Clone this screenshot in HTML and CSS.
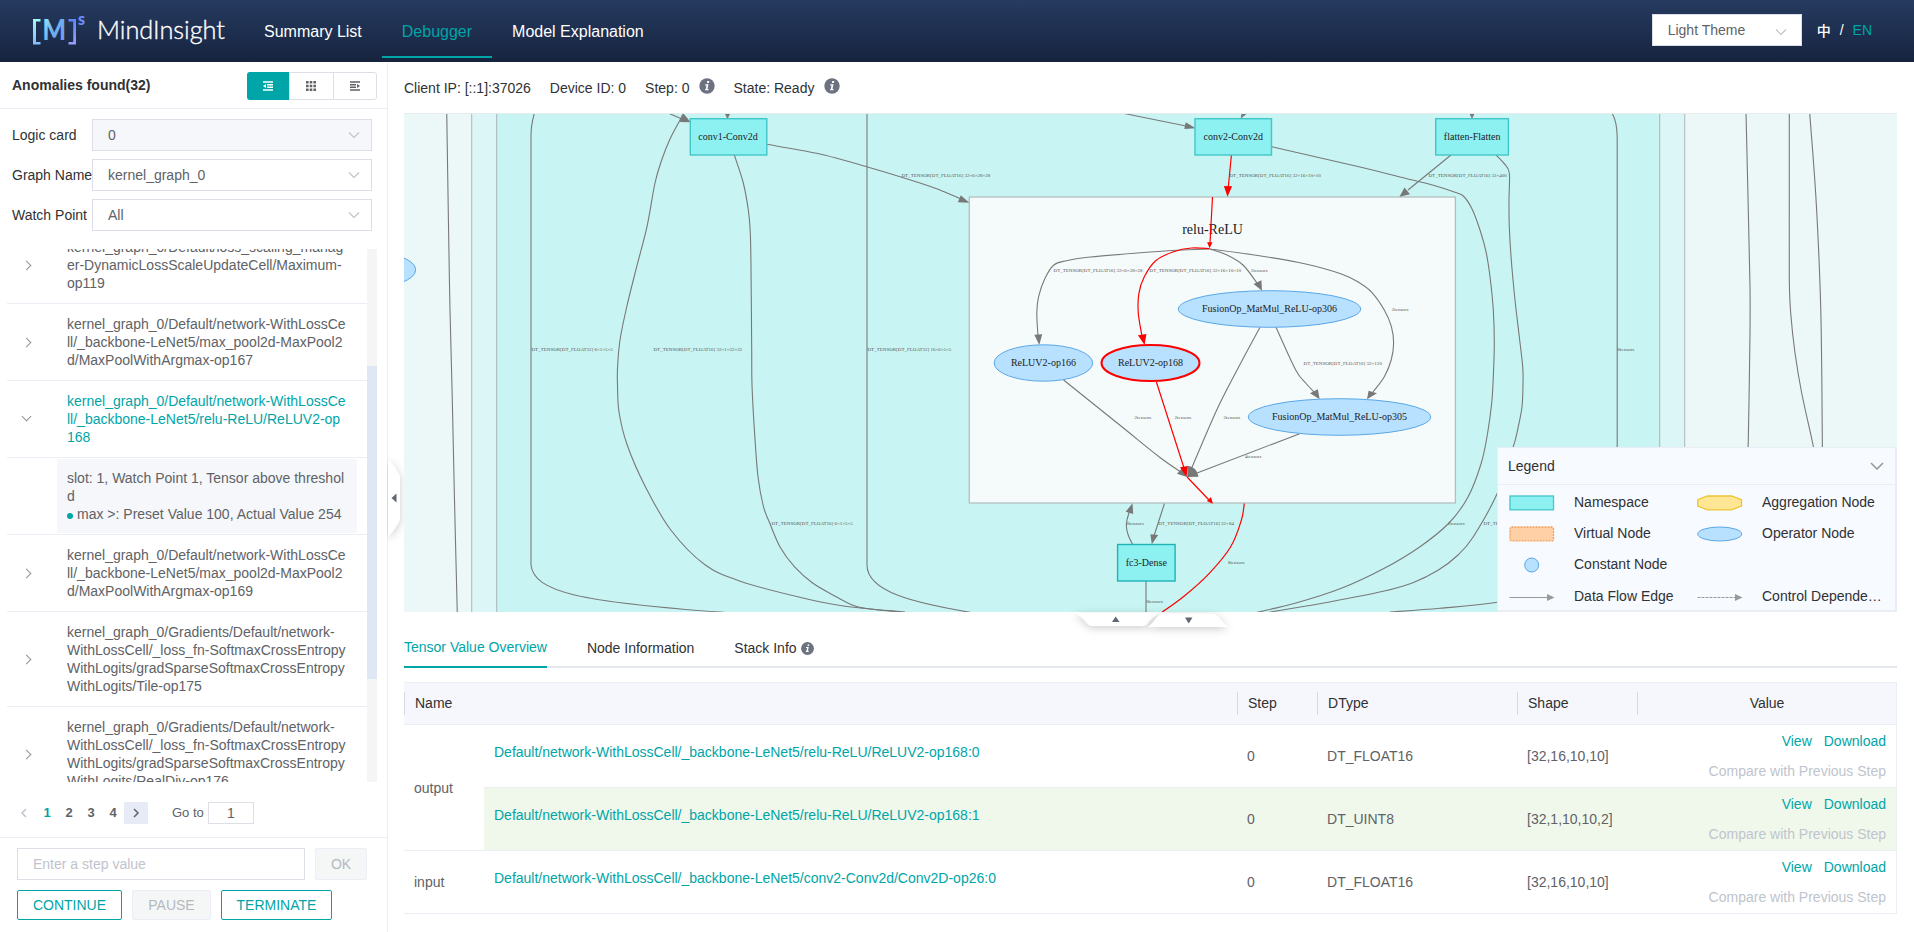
FILE: index.html
```html
<!DOCTYPE html>
<html lang="en">
<head>
<meta charset="utf-8">
<title>MindInsight</title>
<link rel="stylesheet" href="styles.css">
</head>
<body>
<header class="topbar">
  <svg class="logo" width="204" height="52" viewBox="28 4 204 52">
    <defs>
      <linearGradient id="lg" x1="0" y1="0" x2="1" y2="1"><stop offset="0" stop-color="#a4f4f4"/><stop offset=".5" stop-color="#6cb2ee"/><stop offset="1" stop-color="#7f8cf8"/></linearGradient>
      <linearGradient id="lb" x1="0" y1="0" x2="0" y2="1"><stop offset="0" stop-color="#a5fbf3"/><stop offset="1" stop-color="#86b9fb"/></linearGradient>
      <linearGradient id="rb" x1="0" y1="0" x2="0" y2="1"><stop offset="0" stop-color="#5e86f5"/><stop offset="1" stop-color="#9a9cfb"/></linearGradient>
    </defs>
    <path d="M40.500 18H33V43.500H40.500V41H36V20.500H40.500Z" fill="url(#lb)"/>
    <path d="M68.500 18H76V43.500H68.500V41H73.200V20.500H68.500Z" fill="url(#rb)"/>
    <text class="logo-m" x="42.500" y="38.800" textLength="23.500" lengthAdjust="spacingAndGlyphs" fill="url(#lg)">M</text>
    <text class="logo-s" x="78" y="23.500" fill="#6b8cf7">s</text>
    <text class="logo-word" x="97" y="38" textLength="128" lengthAdjust="spacingAndGlyphs">MindInsight</text>
  </svg>
  <nav class="nav">
    <a class="nav-item">Summary List</a>
    <a class="nav-item active">Debugger</a>
    <a class="nav-item">Model Explanation</a>
  </nav>
  <div class="tools">
    <div class="theme">Light Theme<svg class="chev theme-chev" width="14" height="14" viewBox="0 0 14 14"><path d="M2 4.500 7 9.500 12 4.500"/></svg></div>
    <div class="lang"><span class="zh">中</span><span>/</span><span class="en">EN</span></div>
  </div>
</header>
<div class="page">
  <aside class="side">
    <div class="side-head">
      <b>Anomalies found(32)</b>
      <div class="switch">
        <span class="on"><svg width="10" height="10" viewBox="0 0 10 10"><path d="M0 1H10M4 3.700H10M4 6.300H10M0 9H10"/><path class="solid" d="M0 5 3 3V7Z"/></svg></span>
        <span><svg class="grid" width="10" height="10" viewBox="0 0 10 10"><path d="M0 0h2.600v2.600H0zM3.700 0h2.600v2.600H3.700zM7.400 0H10v2.600H7.400zM0 3.700h2.600v2.600H0zM3.700 3.700h2.600v2.600H3.700zM7.400 3.700H10v2.600H7.400zM0 7.400h2.600V10H0zM3.700 7.400h2.600V10H3.700zM7.400 7.400H10V10H7.400z"/></svg></span>
        <span><svg width="10" height="10" viewBox="0 0 10 10"><path d="M0 1H10M0 3.700H6M0 6.300H6M0 9H10"/><path class="solid" d="M10 5 7 3V7Z"/></svg></span>
      </div>
    </div>
    <div class="filters">
      <div class="field"><label>Logic card</label><div class="select disabled">0<svg class="chev" width="14" height="14" viewBox="0 0 14 14"><path d="M2 4.500 7 9.500 12 4.500"/></svg></div></div>
      <div class="field"><label>Graph Name</label><div class="select">kernel_graph_0<svg class="chev" width="14" height="14" viewBox="0 0 14 14"><path d="M2 4.500 7 9.500 12 4.500"/></svg></div></div>
      <div class="field"><label>Watch Point</label><div class="select">All<svg class="chev" width="14" height="14" viewBox="0 0 14 14"><path d="M2 4.500 7 9.500 12 4.500"/></svg></div></div>
    </div>
    <div class="list">
      <div class="rows">
        <div class="row"><i class="arrow"></i><p>kernel_graph_0/Default/loss_scaling_manag<br>er-DynamicLossScaleUpdateCell/Maximum-<br>op119</p></div>
        <div class="row"><i class="arrow"></i><p>kernel_graph_0/Default/network-WithLossCe<br>ll/_backbone-LeNet5/max_pool2d-MaxPool2<br>d/MaxPoolWithArgmax-op167</p></div>
        <div class="row open"><i class="arrow"></i><p>kernel_graph_0/Default/network-WithLossCe<br>ll/_backbone-LeNet5/relu-ReLU/ReLUV2-op<br>168</p></div>
        <div class="row detail"><p>slot: 1, Watch Point 1, Tensor above threshol<br>d<br><i class="dot"></i>max &gt;: Preset Value 100, Actual Value 254</p></div>
        <div class="row"><i class="arrow"></i><p>kernel_graph_0/Default/network-WithLossCe<br>ll/_backbone-LeNet5/max_pool2d-MaxPool2<br>d/MaxPoolWithArgmax-op169</p></div>
        <div class="row"><i class="arrow"></i><p>kernel_graph_0/Gradients/Default/network-<br>WithLossCell/_loss_fn-SoftmaxCrossEntropy<br>WithLogits/gradSparseSoftmaxCrossEntropy<br>WithLogits/Tile-op175</p></div>
        <div class="row"><i class="arrow"></i><p>kernel_graph_0/Gradients/Default/network-<br>WithLossCell/_loss_fn-SoftmaxCrossEntropy<br>WithLogits/gradSparseSoftmaxCrossEntropy<br>WithLogits/RealDiv-op176</p></div>
      </div>
      <div class="scroll"><div class="thumb"></div></div>
    </div>
    <div class="pager">
      <span class="pg prev"><svg width="10" height="10" viewBox="0 0 10 10"><path d="M7 1 3 5 7 9"/></svg></span>
      <span class="pg cur">1</span><span class="pg">2</span><span class="pg">3</span><span class="pg">4</span>
      <span class="next"><svg width="10" height="10" viewBox="0 0 10 10"><path d="M3 1 7 5 3 9"/></svg></span>
      <span class="goto">Go to</span><span class="goto-in">1</span>
    </div>
    <div class="control">
      <div class="crow"><div class="step-in">Enter a step value</div><div class="btn off ok">OK</div></div>
      <div class="crow"><div class="btn w1">CONTINUE</div><div class="btn off w2">PAUSE</div><div class="btn w3">TERMINATE</div></div>
    </div>
    <svg class="fold" width="26" height="96" viewBox="0 0 26 96"><path class="tabshape" d="M1 9 Q9 17 13 26 V70 Q9 79 1 87Z"/><path class="tri" d="M9.500 43.500V52.500L4.500 48Z"/></svg>
  </aside>
  <main class="main">
    <div class="info">
      <span>Client IP: [::1]:37026</span><span>Device ID: 0</span>
      <span class="with-i s1">Step: 0<svg class="ii" width="16" height="16" viewBox="0 0 16 16"><circle cx="8" cy="8" r="7.700"/><path d="M8.300 3h2l-.4 1.900h-2zM6.300 6.200h3.200l-1 4.700h1.100l-.2 1.300H6l.2-1.300h.6l.7-3.400H6.100z"/></svg></span>
      <span class="with-i">State: Ready<svg class="ii" width="16" height="16" viewBox="0 0 16 16"><circle cx="8" cy="8" r="7.700"/><path d="M8.300 3h2l-.4 1.900h-2zM6.300 6.200h3.200l-1 4.700h1.100l-.2 1.300H6l.2-1.300h.6l.7-3.400H6.100z"/></svg></span>
    </div>
    <div class="graph">
      <svg class="canvas" width="1493" height="499" viewBox="404 113 1493 499">
        <rect class="bg0" x="404" y="113" width="1493" height="499"/>
        <rect class="bg1" x="471.700" y="100" width="1213" height="540"/>
        <rect class="bg2" x="496.700" y="100" width="1163" height="540"/>
        <ellipse class="op" cx="366" cy="269.800" rx="49.700" ry="18.300"/>
        <g class="edges">
          <path data-p="446.700,110 448.500,225 450,310 452.300,400 454.500,500 457.300,614"/>
          <path d="M534.700 112 Q531 125 531 135 V565 C534 592 580 602 724 612.300"/>
          <path data-p="684,112 679.500,121 670,139 661.700,160 655,183 647,226.700 636.700,266.700 626.700,307 620,340 617.500,368 617.500,385 619,412 627.200,445 645.400,486.700 670.800,530 705.300,565 741.700,581.700 799.900,597.300 843.500,606 905,612"/>
          <path data-p="734.300,155 743.300,183 748.300,210 750.300,233 751,266.700 751.700,350 752,385 754.400,430 758,476.700 763.500,506.700 769.700,523 779.900,546.700 794.400,566.700 812.600,583 836.200,596.700 854.400,605.700 872.600,609.300 900,612"/>
          <path d="M867 112V565 C867 592 915 603 970 612.300"/>
          <path data-p="766.700,144.300 816.700,153.300 866.700,166.700 920,183 941.400,190.700 960,198.500"/>
          <path d="M668 113 682 119M1123 113.300 1186 126"/>
          <path data-p="1271.800,146.700 1360,167 1400,177 1433.300,185.300 1455,192.300 1463.300,196 1471.700,208.300 1480,230 1486,251.700 1490,276.700 1493.300,310 1494.300,343.300 1493.300,376.700 1491.700,403 1487.300,435 1481,464 1468,497 1449,523 1420,546.700 1384.300,568.300 1341.400,588.300 1295,603.300 1257,612.300"/>
          <path d="M1451 155 1408 190"/>
          <path data-p="1496,155 1504,163.300 1509.300,172.700 1509,200 1509.300,226.700 1511.300,260 1515,300 1519.300,336.700 1522.700,366.700 1523,383.300 1522,406.700 1517.900,428.300 1513.300,446.700 1497.300,493.300 1473.300,536.700 1458,555 1438,570.300 1412.900,582.700 1384.300,591 1330.700,601.700 1269,612.200"/>
          <path data-p="1390,612 1440,608.300 1497.300,602.300 1560,590"/>
          <path d="M1612 113Q1617.200 122 1617.200 138V460"/>
          <path data-p="1746,112 1748.300,210 1750,286.700 1750,333 1749.300,383 1748.300,440 1747.800,455"/>
          <path data-p="1789.300,112 1789.300,200 1789.300,280 1790.700,313 1795,353 1801.700,393 1812,440 1815,455"/>
          <path data-p="1809.600,112 1815,183 1818.300,243 1820.700,306.700 1821.700,366.700 1822.300,440 1822.400,455"/>
          <path data-p="1132.500,544.300 1128.200,535 1126.400,526.700 1127,520 1129.600,511"/>
          <path d="M1164.600 503 1154 536M1146 581V613"/>
        </g>
        <rect class="group" x="969.300" y="197" width="486.100" height="306"/>
        <text class="title" x="1212.500" y="234">relu-ReLU</text>
        <g class="edges">
          <path data-p="1209.600,249 1177,250.300 1134.300,253.300 1087.900,257.300 1066.400,260.700 1053.900,265 1045,278.300 1038.600,296.700 1036.800,313.300 1038,336"/>
          <path data-p="1210,249 1227,255 1243,265 1257,283"/>
          <path data-p="1210,249 1259.300,255.700 1305.700,264 1341.400,274 1359.300,282.700 1371.800,292.300 1384.300,310 1391.400,326.700 1393.600,343.300 1391.200,360 1384.300,376.700 1373,392"/>
          <path data-p="1063.600,380 1120,425.300 1160,457.500 1181,472"/>
          <path data-p="1260,327.300 1237.100,370 1216.400,410.700 1192,467.300"/>
          <path d="M1299.600 433.700 1197 473"/>
          <path data-p="1276,327.300 1295.700,370 1305.700,383 1314,392"/>
        </g>
        <g class="edges hot">
          <path d="M1231.400 155 1228.200 188M1212.500 197 1210 243M1156.400 382 1184 468M1187.100 477 1209 500"/>
          <path data-p="1209.600,248.700 1191.400,248 1173.600,251.700 1155.700,260.700 1144.300,276.700 1138.900,293.300 1138.300,313.300 1142,336"/>
          <path data-p="1244.300,503.500 1241.400,520 1230.700,546.700 1209.300,573.300 1184.300,596 1162,612.300"/>
        </g>
        <g class="heads">
          <path d="M679.500 122 683.500 113.500 690.700 122.300ZM725 114H730L727.500 119ZM1241.400 114H1246.400L1240.700 118.700ZM1469.700 114H1474.300L1472 119ZM969.300 202.700 960.800 195.200 957.800 202.200ZM1195.700 128.300 1185.700 122.300 1184.300 129ZM1399.500 196.700 1404.500 187.500 1410 194.300ZM1039.300 345 1034.300 334.700 1042.200 334.300ZM1262 290.700 1253.600 284 1261.400 280.300ZM1367 399.300 1368.600 390.700 1377 393.300ZM1319.600 399.300 1310 393.300 1317.900 389.300ZM1187.100 477 1177 473.700 1182.500 467.700ZM1187.100 477 1187.900 465.700Q1197 467 1198.600 476.700ZM1132.500 503.300 1125.700 511.700 1133.200 514ZM1151.800 544.300 1150.400 534.300 1158.200 535Z"/>
          <path class="hot" d="M1227.500 196.700 1223.900 186 1232.100 186.300ZM1209.600 248.300 1207.100 242.300 1212.500 242.300ZM1144.600 345 1137.900 335.300 1146.400 334ZM1186.500 477 1180 467.300 1187.900 466ZM1212.900 503.700 1206.800 501 1211 497Z"/>
        </g>
        <g class="ns">
          <rect x="690.300" y="118.700" width="76.500" height="36.300"/><rect x="1195" y="118.700" width="76.500" height="36.300"/><rect x="1435.700" y="118.700" width="72.700" height="36.300"/><rect class="dark" x="1117.600" y="544.500" width="57.500" height="36.500"/>
        </g>
        <g>
          <ellipse class="op" cx="1269.500" cy="309" rx="91.200" ry="18.300"/><ellipse class="op" cx="1043.400" cy="363" rx="49.300" ry="18.200"/><ellipse class="op sel" cx="1150.500" cy="363" rx="49" ry="18"/><ellipse class="op" cx="1339.500" cy="417" rx="91.200" ry="18.300"/>
        </g>
        <g class="names">
          <text x="728" y="140">conv1-Conv2d</text><text x="1233.200" y="140">conv2-Conv2d</text><text x="1472.200" y="140">flatten-Flatten</text><text x="1146.300" y="566">fc3-Dense</text>
          <text x="1269.500" y="312">FusionOp_MatMul_ReLU-op306</text><text x="1339.500" y="420">FusionOp_MatMul_ReLU-op305</text><text x="1043.400" y="366">ReLUV2-op166</text><text x="1150.500" y="366">ReLUV2-op168</text>
        </g>
        <g class="labels">
          <text x="531.500" y="351">DT_TENSOR[DT_FLOAT32] 6×1×5×5</text>
          <text x="653.500" y="351">DT_TENSOR[DT_FLOAT16] 32×1×32×32</text>
          <text x="867.500" y="351">DT_TENSOR[DT_FLOAT32] 16×6×5×5</text>
          <text x="901.500" y="177">DT_TENSOR[DT_FLOAT16] 32×6×28×28</text>
          <text x="1229.500" y="177">DT_TENSOR[DT_FLOAT16] 32×16×10×10</text>
          <text x="1428.500" y="177">DT_TENSOR[DT_FLOAT16] 32×400</text>
          <text x="1053.600" y="272">DT_TENSOR[DT_FLOAT16] 32×6×28×28</text>
          <text x="1149.600" y="272">DT_TENSOR[DT_FLOAT16] 32×16×10×10</text>
          <text x="1303.600" y="365">DT_TENSOR[DT_FLOAT16] 32×120</text>
          <text x="1158.200" y="525">DT_TENSOR[DT_FLOAT16] 32×84</text>
          <text x="771.500" y="525">DT_TENSOR[DT_FLOAT16] 6×1×5×5</text>
          <text x="1483.500" y="525">DT_TENSOR[DT_FLOAT16] 32×400</text>
          <text x="1251" y="272">2tensors</text><text x="1391.800" y="311">2tensors</text><text x="1134.600" y="419">2tensors</text><text x="1174.600" y="419">2tensors</text><text x="1223.600" y="419">2tensors</text><text x="1244.800" y="458">4tensors</text><text x="1127" y="525">8tensors</text><text x="1227.900" y="564">8tensors</text><text x="1146.200" y="603">8tensors</text><text x="1448" y="525">2tensors</text><text x="1617.600" y="351">8tensors</text>
        </g>
        <path class="rim" d="M404 113.500H1897"/>
      </svg>
      <div class="legend">
        <div class="legend-head">Legend<svg width="14" height="8" viewBox="0 0 14 8"><path d="M1 1 7 7 13 1"/></svg></div>
        <div class="legend-body">
          <svg width="46" height="16" viewBox="0 0 46 16"><rect class="l-ns" x="1" y="1" width="43.500" height="13.800"/></svg><span>Namespace</span>
          <svg width="46" height="16" viewBox="0 0 46 16"><path class="l-ag" d="M10.500 1H34.500L44.500 4.700V11L34.500 14.800H10.500L.8 11V4.700Z"/></svg><span>Aggregation Node</span>
          <svg width="46" height="16" viewBox="0 0 46 16"><rect class="l-vn" x="1" y="1" width="43.500" height="13.800" rx="1.500"/></svg><span>Virtual Node</span>
          <svg width="46" height="16" viewBox="0 0 46 16"><ellipse class="op" cx="22.700" cy="8" rx="22" ry="7"/></svg><span>Operator Node</span>
          <svg width="46" height="16" viewBox="0 0 46 16"><circle class="op" cx="22.700" cy="8" r="7"/></svg><span>Constant Node</span><i></i><i></i>
          <svg width="46" height="16" viewBox="0 0 46 16"><path class="l-e" d="M.5 8.500H40"/><path class="l-h" d="M38 5 45.500 8.500 38 12Z"/></svg><span>Data Flow Edge</span>
          <svg width="46" height="16" viewBox="0 0 46 16"><path class="l-e dash" d="M.5 8.500H40"/><path class="l-h" d="M38 5 45.500 8.500 38 12Z"/></svg><span>Control Depende…</span>
        </div>
      </div>
      <svg class="pulls" width="180" height="36" viewBox="1064 606 180 36">
        <path class="tabshape" d="M1074 612.500H1162Q1154 616 1149 622Q1147 626 1143 626H1092Q1089 626 1087 623.500Q1081 616 1074 612.500Z"/>
        <path class="tabshape" d="M1148 627Q1153 623 1157 617Q1160 613.500 1164 613.500H1212Q1216 613.500 1218 616Q1223 623 1228 627Z"/>
        <path class="tri" d="M1112 622H1119.500L1115.700 616.500ZM1185 617.500H1192.500L1188.700 623.500Z"/>
      </svg>
    </div>
    <div class="tabs">
      <span class="tab on">Tensor Value Overview</span><span class="tab">Node Information</span><span class="tab">Stack Info<svg class="ii small" width="13" height="13" viewBox="0 0 16 16"><circle cx="8" cy="8" r="7.900"/><path d="M8.300 3h2l-.4 1.900h-2zM6.300 6.200h3.200l-1 4.700h1.100l-.2 1.300H6l.2-1.300h.6l.7-3.400H6.100z"/></svg></span>
    </div>
    <table class="table">
      <colgroup><col class="c1"><col class="c2"><col class="c3"><col class="c4"><col class="c5"><col class="c6"></colgroup>
      <thead><tr><th colspan="2"><div>Name</div></th><th><div>Step</div></th><th><div>DType</div></th><th><div>Shape</div></th><th class="val"><div>Value</div></th></tr></thead>
      <tbody>
        <tr><td rowspan="2">output</td><td class="link">Default/network-WithLossCell/_backbone-LeNet5/relu-ReLU/ReLUV2-op168:0</td><td>0</td><td>DT_FLOAT16</td><td>[32,16,10,10]</td><td class="ops"><div><a>View</a><a>Download</a></div><div class="mute">Compare with Previous Step</div></td></tr>
        <tr class="hit"><td class="link">Default/network-WithLossCell/_backbone-LeNet5/relu-ReLU/ReLUV2-op168:1</td><td>0</td><td>DT_UINT8</td><td>[32,1,10,10,2]</td><td class="ops"><div><a>View</a><a>Download</a></div><div class="mute">Compare with Previous Step</div></td></tr>
        <tr><td>input</td><td class="link">Default/network-WithLossCell/_backbone-LeNet5/conv2-Conv2d/Conv2D-op26:0</td><td>0</td><td>DT_FLOAT16</td><td>[32,16,10,10]</td><td class="ops"><div><a>View</a><a>Download</a></div><div class="mute">Compare with Previous Step</div></td></tr>
      </tbody>
    </table>
  </main>
</div>
<script src="graph.js"></script>
</body>
</html>
```

FILE: styles.css
```css
* { box-sizing: border-box; }
body { margin: 0; width: 1914px; height: 932px; overflow: hidden; background: #fff; color: #303133; font: 14px/18px "Liberation Sans", Arial, "Noto Sans CJK SC", sans-serif; }
svg { display: block; flex: none; }

/* header */
.topbar { height: 62px; display: flex; align-items: center; padding: 0 42px 0 28px; background: linear-gradient(#263b60, #16233e); color: #fff; }
.logo { margin-top: -1px; }
.logo-m { font: 900 28px Lato, sans-serif; }
.logo-s { font: 900 16px Lato, sans-serif; }
.logo-word { font: 300 25px Lato, sans-serif; fill: #fff; stroke: #fff; stroke-width: .35; }
.nav { display: flex; align-self: stretch; margin-left: 12px; }
.nav-item { height: 58px; padding: 0 20px; font-size: 16px; line-height: 64px; border-bottom: 2px solid transparent; white-space: nowrap; }
.nav-item.active { color: #00a5a7; border-color: #00a5a7; }
.tools { margin-left: auto; display: flex; align-items: center; }
.theme { width: 150px; height: 32px; margin-top: -2px; padding: 0 13px 0 15px; background: #fff; border: 1px solid #dcdfe6; color: #606266; display: flex; align-items: center; justify-content: space-between; }
.theme-chev { margin-top: 4px; }
.chev path { fill: none; stroke: #c0c4cc; stroke-width: 1.2; }
.lang { display: flex; gap: 9px; margin: -2px 0 0 15px; }
.zh { font-family: "Noto Sans CJK SC", sans-serif; font-weight: 500; }
.en { color: #00a5a7; }

/* sidebar */
.page { display: flex; height: 870px; }
.side { position: relative; width: 388px; border-right: 1px solid #ebeef5; display: flex; flex-direction: column; }
.side-head { height: 47px; border-bottom: 1px solid #ebeef5; display: flex; align-items: center; justify-content: space-between; padding: 1px 10px 0 12px; }
.side-head b { margin-top: -1px; }
.switch { display: flex; width: 130px; height: 28px; border: 1px solid #dcdfe6; border-radius: 3px; }
.switch span { flex: 1; display: flex; align-items: center; justify-content: center; border-left: 1px solid #dcdfe6; }
.switch .on { background: #00a5a7; margin: -1px 0; border: 0; border-radius: 3px 0 0 3px; margin-left: -1px; }
.switch path { fill: none; stroke: #606266; stroke-width: 1.4; }
.switch .grid path, .switch .solid { fill: #606266; stroke: none; }
.switch .on path { stroke: #fff; }
.switch .on .solid { fill: #fff; stroke: none; }
.filters { padding: 10px 15px 0 12px; display: flex; flex-direction: column; gap: 8px; }
.field { display: flex; align-items: center; }
.field label { width: 80px; white-space: nowrap; }
.select { width: 280px; height: 32px; border: 1px solid #dcdfe6; padding: 0 10px 0 15px; display: flex; align-items: center; justify-content: space-between; color: #606266; }
.select.disabled { background: #f5f7fa; }
.list { height: 533px; margin: 18px 10px 0 7px; display: flex; overflow: hidden; }
.rows { width: 360px; margin-top: -22px; }
.row { position: relative; display: flex; padding: 11px 0 11px 60px; border-bottom: 1px solid #ebeef5; color: #606266; }
.row p { margin: 0; white-space: nowrap; }
.row.open p { color: #00a5a7; }
.arrow { position: absolute; left: 16px; top: calc(50% - 3px); width: 7px; height: 7px; border: solid #909399; border-width: 1px 1px 0 0; transform: rotate(45deg); }
.open .arrow { transform: rotate(135deg); top: calc(50% - 6px); }
.row.detail { padding: 1px 10px 1px 50px; }
.detail p { flex: 1; padding: 10px; background: #f5f7fa; }
.dot { display: inline-block; width: 6px; height: 6px; border-radius: 3px; background: #00a5a7; margin-right: 4px; }
.scroll { width: 10px; height: 533px; background: #f5f5f5; padding-top: 117px; }
.thumb { height: 313px; background: #dfe6f4; }
.pager { display: flex; align-items: center; height: 22px; margin: 20px 0 0 12px; font-size: 13px; font-weight: bold; color: #606266; }
.pg { width: 22px; display: flex; justify-content: center; }
.pg.prev { width: 24px; }
.pg.cur { color: #00a5a7; }
.pager path { fill: none; stroke: #606266; stroke-width: 1.5; }
.pager .prev path { stroke: #c0c4cc; }
.next { width: 24px; height: 22px; background: #e6ebf5; display: flex; align-items: center; justify-content: center; }
.goto { margin-left: 24px; width: 36px; font-weight: normal; }
.goto-in { width: 46px; height: 22px; border: 1px solid #dcdfe6; text-align: center; font-size: 14px; font-weight: normal; line-height: 21px; }
.control { margin-top: 13px; padding: 10px 16px 0 17px; border-top: 1px solid #ebeef5; display: flex; flex-direction: column; gap: 10px; }
.crow { display: flex; gap: 10px; }
.step-in { width: 288px; height: 32px; border: 1px solid #dcdfe6; padding-left: 15px; line-height: 30px; color: #c0c4cc; }
.btn { height: 30px; border: 1px solid #00a5a7; border-radius: 2px; color: #00a5a7; text-align: center; line-height: 28px; }
.btn.off { border-color: #ebeef5; background: #f5f7f7; color: #b4b8bf; }
.btn.ok { width: 52px; height: 32px; line-height: 30px; }
.w1 { width: 105px; } .w2 { width: 79px; } .w3 { width: 111px; }
.fold { position: absolute; left: 387px; top: 388px; }
.tabshape { fill: #fff; filter: drop-shadow(0 2px 4px rgba(0, 0, 0, .2)); }
.tri { fill: #606673; }

/* main */
.main { width: 1493px; margin-left: 16px; }
.info { height: 51px; display: flex; align-items: center; gap: 19px; white-space: nowrap; }
.with-i { display: flex; align-items: center; }
.ii { margin: -3px -1px 0 10px; }
.ii.small { margin: 0 0 0 4px; }
.ii circle { fill: #6c7280; }
.ii path { fill: #fff; }
.graph { position: relative; height: 499px; }
.rim { stroke: #e6ebeb; }
.bg0 { fill: #ebf8f7; }
.bg1 { fill: #dcf5f6; stroke: #adb8b8; }
.bg2 { fill: #c8f5f3; stroke: #a8b5b4; }
.group { fill: #f5fbfb; stroke: #b3bfbf; stroke-width: 1.3; }
.edges path { fill: none; stroke: #787878; stroke-width: 1.1; }
.edges.hot path { stroke: #f00; stroke-width: 1.2; }
.heads path { fill: #787878; }
.heads .hot { fill: #f00; }
.ns rect { fill: #8df1f1; stroke: #43c6c8; stroke-width: 1.4; }
.ns .dark { stroke: #1fb3b5; }
.op { fill: #b8e0ff; stroke: #5ba8e6; stroke-width: 1; }
.op.sel { stroke: #f00; stroke-width: 2; }
.canvas text { font-family: "Liberation Serif", "Times New Roman", serif; fill: #222; }
.title { font-size: 14px; text-anchor: middle; }
.names { font-size: 10px; text-anchor: middle; }
.labels { font-size: 5px; }
.canvas .labels text { fill: #555; }
.legend { position: absolute; right: 0; bottom: 0; width: 400px; height: 165px; background: #f7faff; border: 1px solid #e9edf6; border-width: 1px 2px 2px 1px; }
.legend-head { height: 37px; padding: 0 11px 0 10px; border-bottom: 1px solid #e9edf6; display: flex; align-items: center; justify-content: space-between; }
.legend-head path { fill: none; stroke: #999; stroke-width: 1.6; }
.legend-body { display: grid; grid-template-columns: 65px 123px 65px 130px; grid-auto-rows: 31.3px; align-items: center; padding: 2px 0 0 11px; white-space: nowrap; }
.legend-body span { margin-top: -2px; }
.l-ns { fill: #8df1f1; stroke: #43c6c8; stroke-width: 1.3; }
.l-ag { fill: #ffe694; stroke: #edc432; stroke-width: 1.3; }
.l-vn { fill: #ffd0a6; stroke: #f0a05c; stroke-width: 1.3; stroke-dasharray: 2 1; }
.l-e { stroke: #999; }
.l-e.dash { stroke-dasharray: 3 1; }
.l-h { fill: #999; }
.pulls { position: absolute; left: 660px; top: 493px; }
.tabs { height: 56px; display: flex; gap: 40px; padding-top: 16px; border-bottom: 2px solid #e4e7ed; }
.tab { height: 40px; line-height: 40px; display: flex; align-items: center; white-space: nowrap; }
.tab.on { color: #00a5a7; border-bottom: 2px solid #00a5a7; }

/* table */
.table { width: 1493px; margin-top: 14px; table-layout: fixed; border-collapse: separate; border-spacing: 0; border-right: 1px solid #ebeef5; border-top: 1px solid #ebeef5; color: #606266; }
.c1 { width: 80px; } .c2 { width: 753px; } .c3 { width: 80px; } .c4 { width: 200px; } .c5 { width: 120px; } .c6 { width: 259px; }
th { height: 42px; padding: 0; background: #f5f7fc; border-bottom: 1px solid #ebeef5; font-weight: normal; text-align: left; color: #303133; }
th div { height: 23px; line-height: 23px; padding-left: 10px; border-left: 1px solid #d6dae2; }
th.val div { text-align: center; padding: 0; }
td { height: 63px; padding: 0 10px; border-bottom: 1px solid #ebeef5; }
td.link { color: #00a5a7; padding: 0 0 8px 10px; }
.hit td { background: #f0f8ec; }
td.ops { text-align: right; padding-left: 0; }
.ops a { color: #00a5a7; margin-left: 12px; }
.ops .mute { margin-top: 12px; color: #c0c4cc; }
```

FILE: graph.js
```js
// Smooth every edge through its routed points (Catmull-Rom to cubic Bezier).
document.querySelectorAll('path[data-p]').forEach(function (el) {
  var p = el.dataset.p.split(' ').map(function (s) { return s.split(',').map(Number); });
  var d = 'M' + p[0];
  for (var i = 0; i < p.length - 1; i++) {
    var a = p[i - 1] || p[i], b = p[i], c = p[i + 1], e = p[i + 2] || c;
    d += 'C' + [b[0] + (c[0] - a[0]) / 6, b[1] + (c[1] - a[1]) / 6,
                c[0] - (e[0] - b[0]) / 6, c[1] - (e[1] - b[1]) / 6, c[0], c[1]].join(' ');
  }
  el.setAttribute('d', d);
});
```
